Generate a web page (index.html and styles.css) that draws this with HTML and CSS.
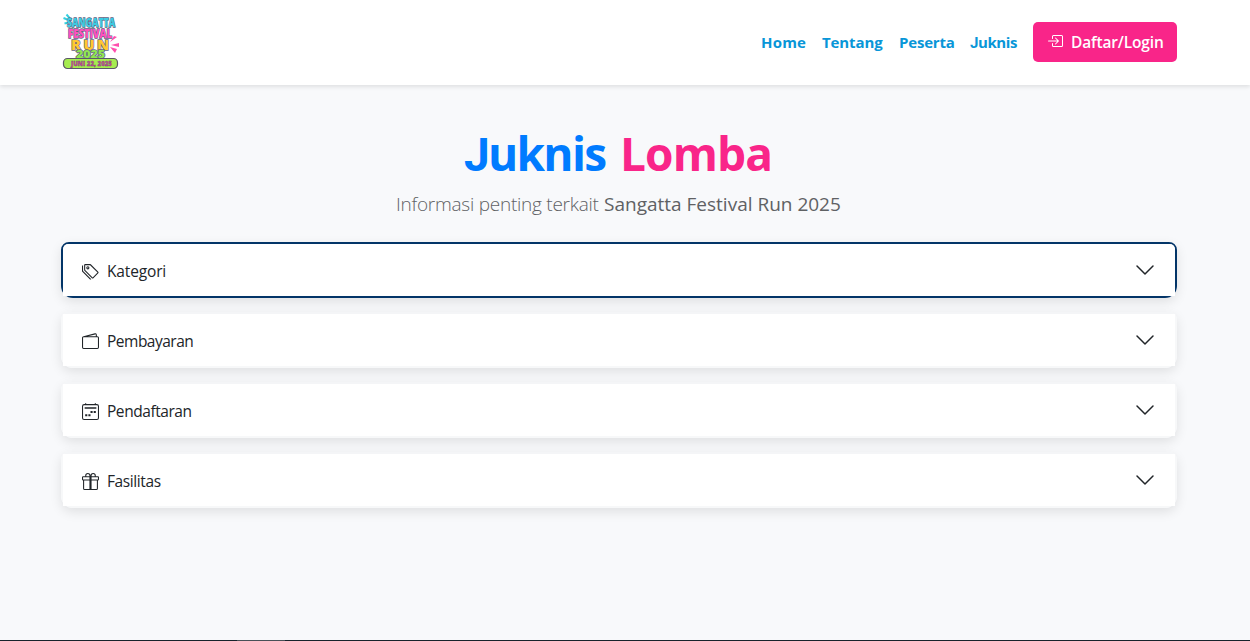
FILE: index.html
```html
<!DOCTYPE html>
<html lang="id">
<head>
<meta charset="utf-8">
<title>Juknis Lomba</title>
<link rel="stylesheet" href="styles.css">
</head>
<body>
<header class="navbar">
  <div class="container navbar-inner">
    <svg class="logo" viewBox="0 0 60 58" width="60" height="58" role="img" aria-label="Sangatta Festival Run 2025">
      <path d="M4.500 1.500l3 3.500M1.500 5l5 2M2.500 10.500l4-1" stroke="#35cfe0" stroke-width="2"/>
      <path d="M48 29l4-6 3 1zM49 32l8-2v4zM48 34l7 2-2 4z" fill="#ff4fae"/>
      <g class="logo-text">
        <text x="5" y="13.500" font-size="12.500" textLength="48" lengthAdjust="spacingAndGlyphs" fill="#3ccbe2">SANGATTA</text>
        <text x="6" y="24.500" font-size="12" textLength="44" lengthAdjust="spacingAndGlyphs" fill="#ff4fc0">FESTIVAL</text>
        <text x="9" y="36.500" font-size="14.500" textLength="38" lengthAdjust="spacing" fill="#ffc832">RUN</text>
        <text x="14" y="45" font-size="10" textLength="29" lengthAdjust="spacingAndGlyphs" fill="#8fe650">2025</text>
      </g>
      <rect x="1.500" y="45.500" width="54" height="10" rx="4" fill="#a6ec50" stroke="#5b5868" stroke-width="1.200"/>
      <text class="logo-date" x="9" y="53" font-size="7" textLength="41" lengthAdjust="spacingAndGlyphs">JUNI 22, 2025</text>
    </svg>
    <nav class="nav">
      <a class="nav-link home">Home</a>
      <a class="nav-link tentang">Tentang</a>
      <a class="nav-link peserta">Peserta</a>
      <a class="nav-link juknis">Juknis</a>
      <a class="login">
        <svg class="icon" viewBox="0 0 16 16" width="16" height="16" fill="currentColor"><path fill-rule="evenodd" d="M6 3.500a.5.5 0 0 1 .5-.5h8a.5.5 0 0 1 .5.5v9a.5.5 0 0 1-.5.5h-8a.5.5 0 0 1-.5-.5v-2a.5.5 0 0 0-1 0v2A1.500 1.500 0 0 0 6.500 14h8a1.500 1.500 0 0 0 1.500-1.500v-9A1.500 1.500 0 0 0 14.500 2h-8A1.500 1.500 0 0 0 5 3.500v2a.5.5 0 0 0 1 0z"/><path fill-rule="evenodd" d="M11.854 8.354a.5.5 0 0 0 0-.708l-3-3a.5.5 0 1 0-.708.708L10.293 7.500H1.500a.5.5 0 0 0 0 1h8.793l-2.147 2.146a.5.5 0 0 0 .708.708z"/></svg>
        <span class="login-label">Daftar/Login</span>
      </a>
    </nav>
  </div>
</header>
<main class="container main">
  <h1 class="title"><span class="title-blue">Juknis</span><span class="title-pink">Lomba</span></h1>
  <p class="lead"><span class="lead-light">Informasi penting terkait</span><span class="lead-strong">Sangatta Festival Run 2025</span></p>
  <div class="accordion">
    <section class="item active"><button class="item-button">
      <svg class="icon" viewBox="0 0 16 16" width="17" height="17" fill="currentColor"><path d="M3 2v4.586l7 7L14.586 9l-7-7zM2 2a1 1 0 0 1 1-1h4.586a1 1 0 0 1 .707.293l7 7a1 1 0 0 1 0 1.414l-4.586 4.586a1 1 0 0 1-1.414 0l-7-7A1 1 0 0 1 2 6.586z"/><path d="M5.500 5a.5.5 0 1 1 0-1 .5.5 0 0 1 0 1m0 1a1.500 1.500 0 1 0 0-3 1.500 1.500 0 0 0 0 3M1 7.086a1 1 0 0 0 .293.707L8.750 15.250l-.043.043a1 1 0 0 1-1.414 0l-7-7A1 1 0 0 1 0 7.586V3a1 1 0 0 1 1-1z"/></svg>
      <span class="label kategori">Kategori</span>
      <svg class="chevron" viewBox="0 0 20 20" width="20" height="20"><path d="M2 6l8 8 8-8"/></svg>
    </button></section>
    <section class="item"><button class="item-button">
      <svg class="icon" viewBox="0 0 16 16" width="17" height="17" fill="currentColor"><path d="M12.136.326A1.500 1.500 0 0 1 14 1.780V3h.5A1.500 1.500 0 0 1 16 4.500v9a1.500 1.500 0 0 1-1.500 1.500h-13A1.500 1.500 0 0 1 0 13.500v-9a1.500 1.500 0 0 1 1.432-1.499zM5.562 3H13V1.780a.5.5 0 0 0-.621-.484zM1.500 4a.5.5 0 0 0-.5.5v9a.5.5 0 0 0 .5.5h13a.5.5 0 0 0 .5-.5v-9a.5.5 0 0 0-.5-.5z"/></svg>
      <span class="label pembayaran">Pembayaran</span>
      <svg class="chevron" viewBox="0 0 20 20" width="20" height="20"><path d="M2 6l8 8 8-8"/></svg>
    </button></section>
    <section class="item"><button class="item-button">
      <svg class="icon" viewBox="0 0 16 16" width="17" height="17" fill="currentColor"><path d="M3.500 0a.5.5 0 0 1 .5.5V1h8V.5a.5.5 0 0 1 1 0V1h1a2 2 0 0 1 2 2v11a2 2 0 0 1-2 2H2a2 2 0 0 1-2-2V3a2 2 0 0 1 2-2h1V.5a.5.5 0 0 1 .5-.5M2 2a1 1 0 0 0-1 1v11a1 1 0 0 0 1 1h12a1 1 0 0 0 1-1V3a1 1 0 0 0-1-1z"/><path d="M2.500 4h11v1.500h-11zM11 7.500h2v2h-2zM8 7.500h2v2H8zM3 10.500h2v2H3zM6 10.500h2v2H6z"/></svg>
      <span class="label pendaftaran">Pendaftaran</span>
      <svg class="chevron" viewBox="0 0 20 20" width="20" height="20"><path d="M2 6l8 8 8-8"/></svg>
    </button></section>
    <section class="item"><button class="item-button">
      <svg class="icon" viewBox="0 0 16 16" width="17" height="17" fill="currentColor"><path d="M3 2.500a2.500 2.500 0 0 1 5 0 2.500 2.500 0 0 1 5 0v.006c0 .07 0 .27-.038.494H15a1 1 0 0 1 1 1v2a1 1 0 0 1-1 1v7.500a1.500 1.500 0 0 1-1.500 1.500h-11A1.500 1.500 0 0 1 1 14.500V7a1 1 0 0 1-1-1V4a1 1 0 0 1 1-1h2.038A3 3 0 0 1 3 2.506zm1.068.5H7v-.5a1.500 1.500 0 1 0-3 0c0 .085.002.274.045.43zM9 3h2.932l.023-.07c.043-.156.045-.345.045-.43a1.500 1.500 0 0 0-3 0zM1 4v2h6V4zm8 0v2h6V4zm5 3H9v8h4.500a.5.5 0 0 0 .5-.5zm-7 8V7H2v7.500a.5.5 0 0 0 .5.5z"/></svg>
      <span class="label fasilitas">Fasilitas</span>
      <svg class="chevron" viewBox="0 0 20 20" width="20" height="20"><path d="M2 6l8 8 8-8"/></svg>
    </button></section>
  </div>
</main>
<footer class="footer"><span class="footer-mark"></span></footer>
</body>
</html>
```
FILE: styles.css
```css
* { box-sizing: border-box; }
body {
  margin: 0;
  height: 641px;
  display: flex;
  flex-direction: column;
  overflow: hidden;
  background: #f8f9fb;
  color: #212529;
  font-family: "Open Sans", "Noto Sans", sans-serif;
  font-size: 16px;
}
.container { width: 1116px; margin-left: 61px; }
.navbar {
  height: 85px;
  background: #fff;
  box-shadow: 0 2px 4px rgba(0, 0, 0, .1);
}
.navbar-inner { display: flex; justify-content: space-between; padding-top: 13px; }
.logo { margin-left: 1px; overflow: visible; }
.logo-text {
  font-family: "Open Sans", sans-serif;
  font-weight: 800;
  stroke: #625f80;
  stroke-width: 1.300px;
  paint-order: stroke;
}
.logo-date {
  font-family: "Open Sans", sans-serif;
  font-weight: 800;
  fill: #d9409c;
  stroke: #51506a;
  stroke-width: .3px;
}
.nav { display: flex; margin-top: 9px; height: 40px; line-height: 41px; }
.nav-link { color: #0896d8; font-weight: 700; font-size: 15px; white-space: nowrap; }
.home { width: 61px; letter-spacing: .2px; }
.tentang { width: 77px; letter-spacing: -.1px; }
.peserta { width: 71px; letter-spacing: -.2px; }
.juknis { width: 63px; letter-spacing: -.4px; }
.juknis::first-letter { font-family: Roboto, sans-serif; }
.login {
  width: 144px;
  padding: 0 0 0 14px;
  display: flex;
  align-items: center;
  background: #f92589;
  color: #fff;
  border-radius: 5px;
  font-weight: 600;
  font-size: 15.500px;
  letter-spacing: -.15px;
}
.login .icon { margin-top: -2px; }
.login-label { margin-left: 8px; line-height: 38px; }
.icon { flex: none; }
.main { flex: 1; }
.title {
  margin: 0;
  height: 97px;
  padding: 39px 0 0 403px;
  display: flex;
  line-height: 58px;
  font-size: 46px;
  font-weight: 700;
}
.title-blue { width: 156px; color: #007bff; letter-spacing: -1.700px; }
.title-blue::first-letter { font-family: Roboto, sans-serif; font-size: 46px; }
.title-pink { color: #f92589; letter-spacing: -.9px; }
.lead {
  margin: 0;
  padding: 7px 0 0 335px;
  display: flex;
  height: 60px;
  line-height: 30px;
  font-size: 19px;
  color: #5f6164;
  white-space: nowrap;
}
.lead-light { width: 208px; font-weight: 300; letter-spacing: -.25px; }
.accordion { display: flex; flex-direction: column; gap: 14px; }
.item {
  height: 56px;
  border: 2px solid #f7f8f9;
  border-top-color: #f4f5f7;
  border-radius: 8px 8px 12px 12px;
  box-shadow: 0 4px 12px rgba(0, 0, 0, .1);
}
.active { border-color: #033568; }
.item-button {
  width: 100%;
  height: 52px;
  margin: 0;
  border: 0;
  padding: 2px 20px 0 19px;
  display: flex;
  align-items: center;
  background: #fff;
  color: #212529;
  font: 15.500px "Open Sans", "Noto Sans", sans-serif;
}
.active .item-button { border-radius: 5px 5px 0 0; }
.label { margin-left: 8px; line-height: 24px; }
.kategori { letter-spacing: -.15px; }
.pembayaran { letter-spacing: -.5px; }
.pendaftaran { letter-spacing: -.45px; }
.fasilitas { letter-spacing: -.4px; }
.chevron {
  margin: -3px 0 0 auto;
  fill: none;
  stroke: #212529;
  stroke-width: 1.500;
  stroke-linecap: round;
  stroke-linejoin: round;
}
.footer { height: 1px; background: #17222b; display: flex; }
.footer-mark { width: 48px; margin-left: 237px; background: #495057; }
```
